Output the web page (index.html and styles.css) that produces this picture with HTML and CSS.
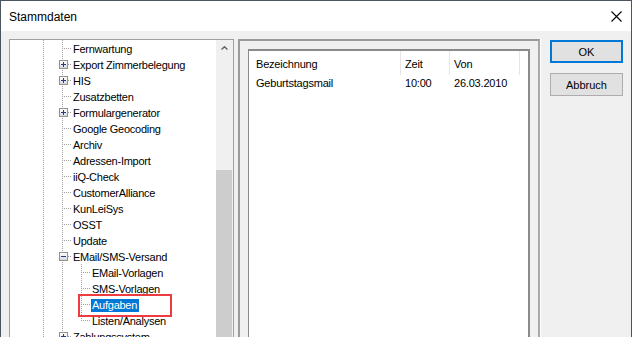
FILE: index.html
```html
<!DOCTYPE html>
<html lang="de">
<head>
<meta charset="utf-8">
<title>Stammdaten</title>
<link rel="stylesheet" href="styles.css">
</head>
<body>
<div class="window">
  <div class="titlebar">
    <span class="title">Stammdaten</span>
    <svg class="close" width="11" height="11" viewBox="0 0 11 11"><path d="M0.5 0.5 L10.5 10.5 M10.5 0.5 L0.5 10.5" stroke="#000" stroke-width="1.1" fill="none"/></svg>
  </div>
  <div class="body">
    <div class="tree">
      <div class="tree-items">
        <div class="row"><i class="g"></i><i class="g pipe"></i><i class="g tee"></i><span class="label">Fernwartung</span></div>
        <div class="row"><i class="g"></i><i class="g pipe"></i><i class="g tee"><b class="box plus"></b></i><span class="label">Export Zimmerbelegung</span></div>
        <div class="row"><i class="g"></i><i class="g pipe"></i><i class="g tee"><b class="box plus"></b></i><span class="label">HIS</span></div>
        <div class="row"><i class="g"></i><i class="g pipe"></i><i class="g tee"></i><span class="label">Zusatzbetten</span></div>
        <div class="row"><i class="g"></i><i class="g pipe"></i><i class="g tee"><b class="box plus"></b></i><span class="label">Formulargenerator</span></div>
        <div class="row"><i class="g"></i><i class="g pipe"></i><i class="g tee"></i><span class="label">Google Geocoding</span></div>
        <div class="row"><i class="g"></i><i class="g pipe"></i><i class="g tee"></i><span class="label">Archiv</span></div>
        <div class="row"><i class="g"></i><i class="g pipe"></i><i class="g tee"></i><span class="label">Adressen-Import</span></div>
        <div class="row"><i class="g"></i><i class="g pipe"></i><i class="g tee"></i><span class="label">iiQ-Check</span></div>
        <div class="row"><i class="g"></i><i class="g pipe"></i><i class="g tee"></i><span class="label">CustomerAlliance</span></div>
        <div class="row"><i class="g"></i><i class="g pipe"></i><i class="g tee"></i><span class="label">KunLeiSys</span></div>
        <div class="row"><i class="g"></i><i class="g pipe"></i><i class="g tee"></i><span class="label">OSST</span></div>
        <div class="row"><i class="g"></i><i class="g pipe"></i><i class="g tee"></i><span class="label">Update</span></div>
        <div class="row"><i class="g"></i><i class="g pipe"></i><i class="g tee"><b class="box"></b></i><span class="label">EMail/SMS-Versand</span></div>
        <div class="row"><i class="g"></i><i class="g pipe"></i><i class="g pipe"></i><i class="g tee"></i><span class="label">EMail-Vorlagen</span></div>
        <div class="row"><i class="g"></i><i class="g pipe"></i><i class="g pipe"></i><i class="g tee"></i><span class="label">SMS-Vorlagen</span></div>
        <div class="row"><i class="g"></i><i class="g pipe"></i><i class="g pipe"></i><i class="g tee"></i><span class="label selected">Aufgaben</span></div>
        <div class="row"><i class="g"></i><i class="g pipe"></i><i class="g pipe"></i><i class="g elbow"></i><span class="label">Listen/Analysen</span></div>
        <div class="row"><i class="g"></i><i class="g pipe"></i><i class="g tee"><b class="box plus"></b></i><span class="label">Zahlungssystem</span></div>
      </div>
      <div class="scrollbar">
        <div class="sb-up"><svg width="7" height="4" viewBox="0 0 7 4"><path d="M0.5 3.5 L3.5 0.7 L6.5 3.5" stroke="#606060" stroke-width="1.3" fill="none"/></svg></div>
        <div class="sb-track"><div class="sb-thumb"></div></div>
      </div>
      <div class="highlight"></div>
    </div>
    <div class="frame">
      <div class="listview">
        <div class="lv-grid lv-head">
          <div class="cell c1 sep">Bezeichnung</div>
          <div class="cell c2 sep">Zeit</div>
          <div class="cell c3 sep">Von</div>
          <div class="cell"></div>
        </div>
        <div class="lv-grid lv-row">
          <div class="cell c1">Geburtstagsmail</div>
          <div class="cell c2">10:00</div>
          <div class="cell c3">26.03.2010</div>
          <div class="cell"></div>
        </div>
      </div>
    </div>
    <div class="buttons">
      <button class="btn default">OK</button>
      <button class="btn">Abbruch</button>
    </div>
  </div>
</div>
</body>
</html>
```
FILE: styles.css
```css
* { box-sizing: border-box; }
html, body { margin: 0; padding: 0; }
body {
  width: 632px;
  height: 337px;
  overflow: hidden;
  font-family: "Liberation Sans", Arial, sans-serif;
  font-size: 11px;
  color: #000;
  background: #f0f0f0;
}
.window {
  width: 632px;
  height: 337px;
  border: 1px solid #4a5560;
  border-bottom: 0;
  display: flex;
  flex-direction: column;
  background: #f0f0f0;
  overflow: hidden;
}
.titlebar {
  height: 30px;
  flex: none;
  background: #fff;
  display: flex;
  align-items: center;
  justify-content: space-between;
  padding: 0 9px 0 8px;
}
.title {
  font-size: 12px;
  line-height: 14px;
  padding-top: 1px;
}
.close { display: block; margin-top: 1px; }

.body {
  flex: 1;
  display: flex;
  align-items: flex-start;
  padding: 8px 8px 0 8px;
  min-height: 0;
}

/* tree */
.tree {
  position: relative;
  width: 225px;
  height: 320px;
  flex: none;
  background: #fff;
  border: 1px solid #a0a0a0;
  display: flex;
}
.tree-items {
  flex: 1;
  padding-left: 5px;
  overflow: hidden;
  letter-spacing: -0.25px;
}
.row {
  height: 16px;
  display: flex;
  align-items: center;
  white-space: nowrap;
}
.g {
  width: 19px;
  height: 16px;
  flex: none;
  display: flex;
  align-items: center;
  justify-content: center;
}
.pipe {
  background: repeating-linear-gradient(to bottom, #a0a0a0 0 1px, transparent 1px 2px) no-repeat 9px 0 / 1px 16px;
}
.tee {
  background:
    repeating-linear-gradient(to bottom, #a0a0a0 0 1px, transparent 1px 2px) no-repeat 9px 0 / 1px 16px,
    repeating-linear-gradient(to right, #a0a0a0 0 1px, transparent 1px 2px) no-repeat 11px 8px / 8px 1px;
}
.elbow {
  background:
    repeating-linear-gradient(to bottom, #a0a0a0 0 1px, transparent 1px 2px) no-repeat 9px 0 / 1px 9px,
    repeating-linear-gradient(to right, #a0a0a0 0 1px, transparent 1px 2px) no-repeat 11px 8px / 8px 1px;
}
.box {
  width: 9px;
  height: 9px;
  border: 1px solid #919191;
  margin-left: 1px;
  margin-top: 1px;
  background:
    linear-gradient(#1d3f8f, #1d3f8f) center / 5px 1px no-repeat,
    linear-gradient(#fff, #d8d8d8);
}
.box.plus {
  background:
    linear-gradient(#1d3f8f, #1d3f8f) center / 5px 1px no-repeat,
    linear-gradient(#1d3f8f, #1d3f8f) center / 1px 5px no-repeat,
    linear-gradient(#fff, #d8d8d8);
}
.label {
  padding: 0 1px;
  line-height: 13px;
  margin-top: 2px;
}
.label.selected {
  background: #0078d7;
  color: #fff;
  padding: 0 2px 0 1px;
}
.scrollbar {
  width: 17px;
  flex: none;
  display: flex;
  flex-direction: column;
  background: #f0f0f0;
}
.sb-up {
  height: 17px;
  flex: none;
  display: flex;
  align-items: center;
  justify-content: center;
  padding-right: 1px;
}
.sb-up svg { display: block; margin-top: -2px; }
.sb-track {
  flex: 1;
  padding-top: 113px;
  padding-right: 1px;
}
.sb-thumb {
  height: 100%;
  background: #cdcdcd;
}
.highlight {
  position: absolute;
  left: 68px;
  top: 254px;
  width: 94px;
  height: 23px;
  border: 2px solid #ee3b40;
  pointer-events: none;
}

/* right frame */
.frame {
  width: 302px;
  height: 320px;
  flex: none;
  margin-left: 4px;
  border-top: 2px solid #9a9a9a;
  border-left: 2px solid #9a9a9a;
  border-right: 2px solid #a8a8a8;
  box-shadow: 1px 0 0 #fff;
  padding: 8px 8px 0 8px;
}
.listview {
  height: 100%;
  background: #fff;
  border-top: 2px solid #8a8a8a;
  border-left: 1px solid #8a8a8a;
  border-right: 2px solid #8a8a8a;
  letter-spacing: -0.2px;
}
.lv-grid {
  display: grid;
  grid-template-columns: 152px 49px 70px 1fr;
}
.lv-head { height: 24px; }
.lv-head .cell {
  display: flex;
  align-items: center;
  padding-top: 1px;
}
.lv-head .sep { border-right: 1px solid #e5e5e5; }
.lv-row { height: 16px; }
.lv-row .cell {
  line-height: 16px;
  white-space: nowrap;
}
.c1 { padding-left: 7px; }
.c2 { padding-left: 4px; }
.c3 { padding-left: 4px; }

/* buttons */
.buttons {
  margin-left: 10px;
  margin-top: 1px;
  display: flex;
  flex-direction: column;
  gap: 10px;
  flex: none;
}
.btn {
  width: 73px;
  height: 23px;
  font-family: "Liberation Sans", Arial, sans-serif;
  font-size: 11px;
  color: #000;
  background: #e1e1e1;
  border: 1px solid #adadad;
  padding: 0;
  margin: 0;
}
.btn.default {
  border: 2px solid #0078d7;
}
```
